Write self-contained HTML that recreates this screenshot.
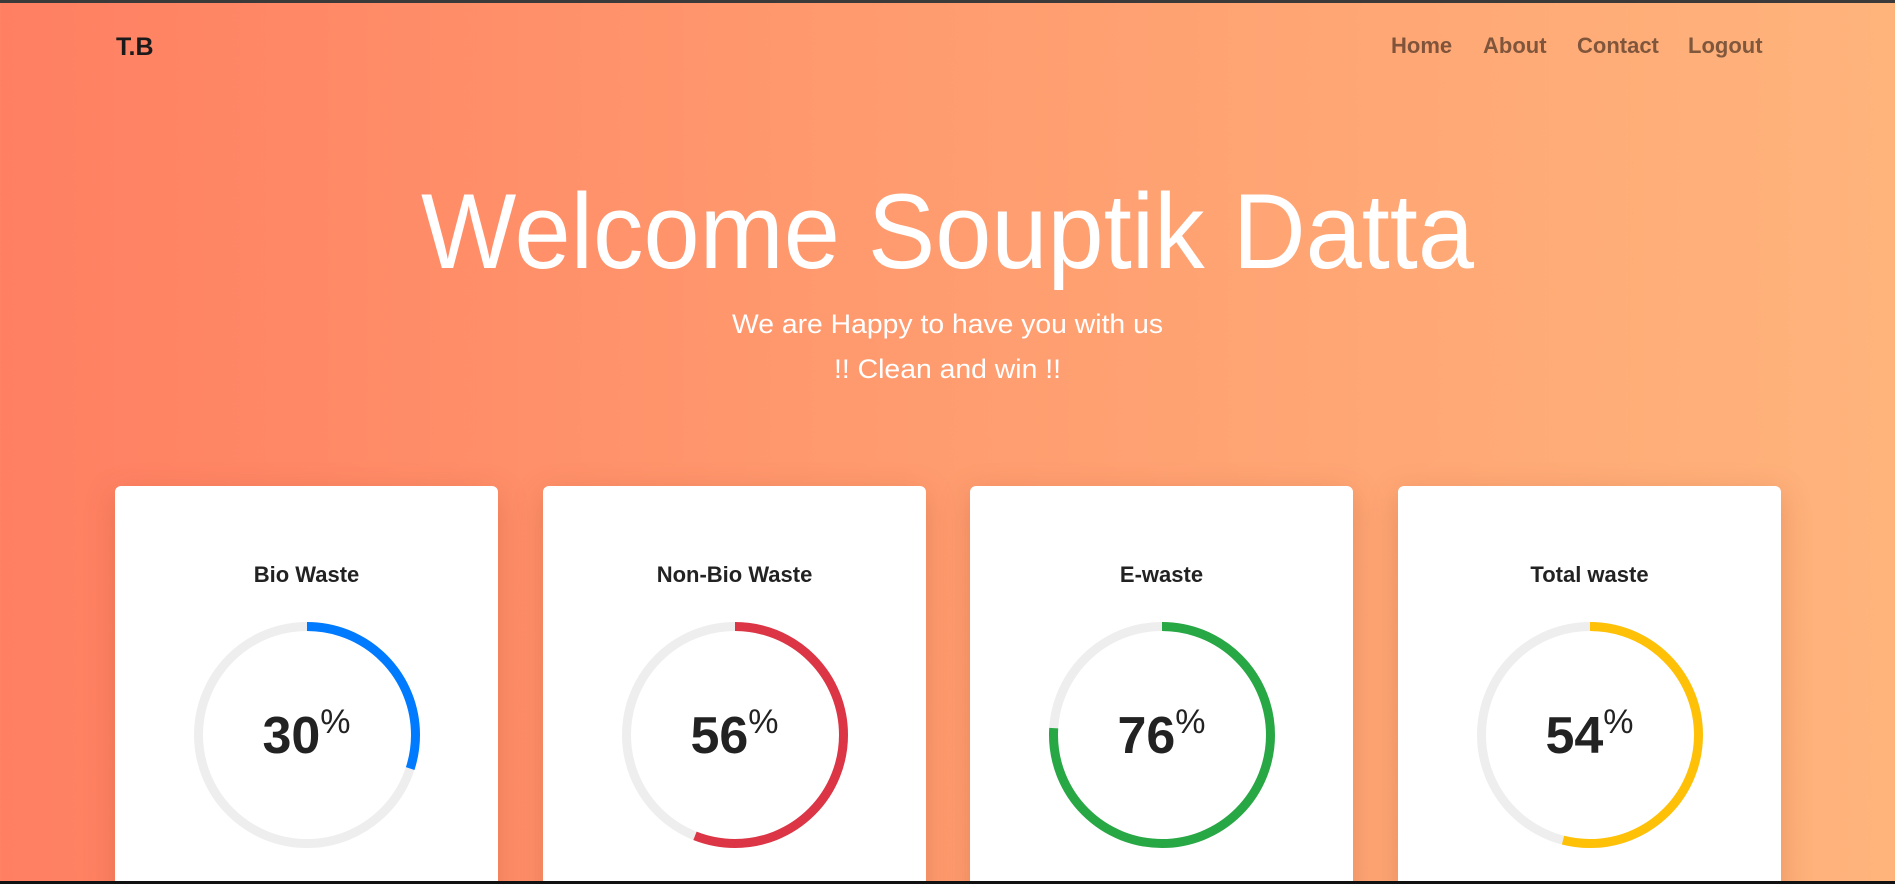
<!DOCTYPE html>
<html><head><meta charset="utf-8"><style>
*{margin:0;padding:0;box-sizing:border-box}
html,body{width:1895px;height:884px;overflow:hidden}
body{background:linear-gradient(90deg,#ff7f62 0%,#ff9a6e 45%,#ffb47c 100%);font-family:"Liberation Sans",sans-serif;position:relative}
.topbar{position:absolute;left:0;top:0;width:1895px;height:3px;background:#3a3a3a}
.botbar{position:absolute;left:0;top:881px;width:1895px;height:3px;background:#111}
.brand{position:absolute;left:116px;top:33px;font-weight:bold;font-size:25px;color:#1a1a1a}
.nav{position:absolute;top:33px;font-weight:bold;font-size:22px;color:rgba(0,0,0,.5)}
.card{position:absolute;top:486px;width:383px;height:420px;background:#fff;border-radius:6px;box-shadow:0 8px 30px rgba(160,60,30,.25)}
.card h3{position:absolute;top:76px;width:100%;text-align:center;font-size:22px;color:#222;font-weight:bold}
.card svg{position:absolute;left:78px;top:135px}
.num{position:absolute;left:0;width:100%;top:217px;text-align:center;font-weight:bold;font-size:52px;color:#222}
.num sup{font-weight:normal;font-size:34px;vertical-align:20px}
</style></head><body>
<div class="topbar"></div>
<div class="brand">T.B</div>
<div class="nav" style="left:1391px">Home</div>
<div class="nav" style="left:1483px">About</div>
<div class="nav" style="left:1577px">Contact</div>
<div class="nav" style="left:1688px">Logout</div>
<svg style="position:absolute;left:0;top:0" width="1895" height="400" font-family="Liberation Sans, sans-serif" fill="#fff"><text x="421" y="268" textLength="1053" lengthAdjust="spacingAndGlyphs" font-size="107">Welcome Souptik Datta</text>
<text x="732" y="333" textLength="431" lengthAdjust="spacingAndGlyphs" font-size="27">We are Happy to have you with us</text>
<text x="834" y="378" textLength="227" lengthAdjust="spacingAndGlyphs" font-size="27">!! Clean and win !!</text></svg>

<div class="card" style="left:115px"><h3>Bio Waste</h3>
<svg width="228" height="228"><circle cx="114" cy="114" r="108.5" fill="none" stroke="#eee" stroke-width="9"/><circle cx="114" cy="114" r="108.5" fill="none" stroke="#007bff" stroke-width="9" stroke-dasharray="204.5 1000" transform="rotate(-90 114 114)"/></svg>
<div class="num">30<sup>%</sup></div></div>

<div class="card" style="left:543px"><h3>Non-Bio Waste</h3>
<svg width="228" height="228"><circle cx="114" cy="114" r="108.5" fill="none" stroke="#eee" stroke-width="9"/><circle cx="114" cy="114" r="108.5" fill="none" stroke="#dc3545" stroke-width="9" stroke-dasharray="381.7 1000" transform="rotate(-90 114 114)"/></svg>
<div class="num">56<sup>%</sup></div></div>

<div class="card" style="left:970px"><h3>E-waste</h3>
<svg width="228" height="228"><circle cx="114" cy="114" r="108.5" fill="none" stroke="#eee" stroke-width="9"/><circle cx="114" cy="114" r="108.5" fill="none" stroke="#28a745" stroke-width="9" stroke-dasharray="518 1000" transform="rotate(-90 114 114)"/></svg>
<div class="num">76<sup>%</sup></div></div>

<div class="card" style="left:1398px"><h3>Total waste</h3>
<svg width="228" height="228"><circle cx="114" cy="114" r="108.5" fill="none" stroke="#eee" stroke-width="9"/><circle cx="114" cy="114" r="108.5" fill="none" stroke="#ffc107" stroke-width="9" stroke-dasharray="368 1000" transform="rotate(-90 114 114)"/></svg>
<div class="num">54<sup>%</sup></div></div>
<div class="botbar"></div>
</body></html>
